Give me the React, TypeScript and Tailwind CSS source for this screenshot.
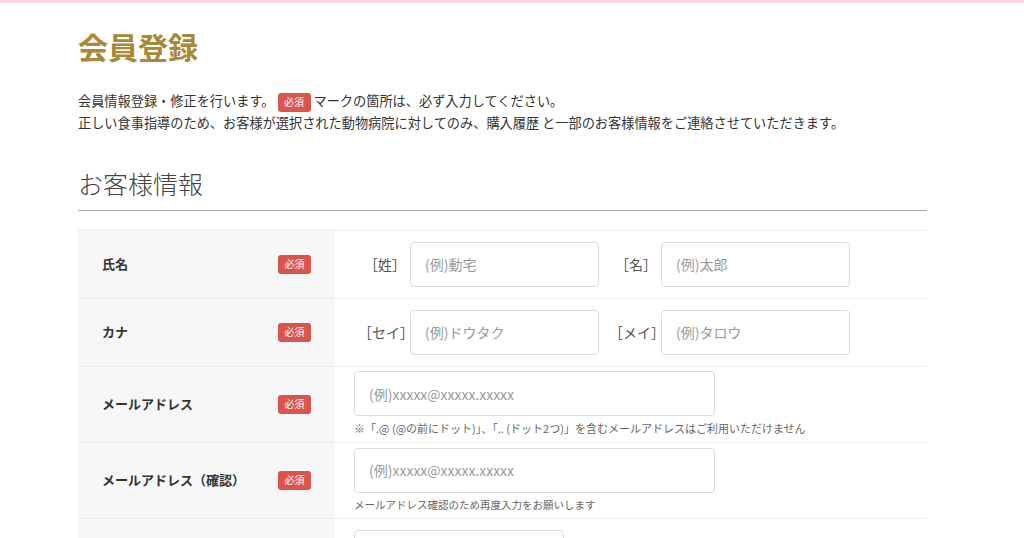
import React from "react";

const font = { fontFamily: '"Noto Sans CJK JP", "Noto Sans", sans-serif' };

const Badge = () => (
    <span className="inline-flex items-center justify-center w-[33px] h-[19px] rounded-[3px] bg-[#d9534f] text-white text-[10px] leading-none">
        必須
    </span>
);

const Field = ({ placeholder, w }: { placeholder: string; w: string }) => (
    <input
        placeholder={placeholder}
        className={`${w} h-[45px] rounded-[4px] border border-[#dcdcdc] bg-white px-[14px] text-[14px] text-[#333] placeholder:text-[#9a9a9a] outline-none`}
    />
);

interface RowProps {
    label: string;
    height: string;
    children: React.ReactNode;
}

const Row = ({ label, height, children }: RowProps) => (
    <div className={`flex border-b border-[#ebebeb] ${height}`}>
        <div className="w-[257px] shrink-0 bg-[#f7f7f7] flex items-center justify-between pl-[24px] pr-[24px]">
            <span className="text-[13px] font-bold text-[#333]">{label}</span>
            <Badge />
        </div>
        <div className="flex-1 flex flex-col justify-center pl-[19px]">{children}</div>
    </div>
);

export default function App() {
    return (
        <div className="min-h-screen bg-white border-t-[3px] border-[#fbd5dc]" style={font}>
            <div className="w-[849px] ml-[78px]">
                <h1 className="mt-[23px] text-[30px] font-bold text-[#a8893a] leading-[40px]">会員登録</h1>
                <div className="mt-[24px] text-[13.2px] leading-[21px] text-[#333]">
                    <p className="flex items-center">
                        会員情報登録・修正を行います。
                        <span className="mx-[3px]"><Badge /></span>
                        マークの箇所は、必ず入力してください。
                    </p>
                    <p>正しい食事指導のため、お客様が選択された動物病院に対してのみ、購入履歴 と一部のお客様情報をご連絡させていただきます。</p>
                </div>
                <h2 className="mt-[32px] text-[25px] font-light text-[#444] leading-[36px]">お客様情報</h2>
                <div className="mt-[9px] border-t border-[#a9a9a9]" />
                <div className="mt-[19px] border-t border-[#ebebeb]">
                    <Row label="氏名" height="h-[68px]">
                        <div className="flex items-center text-[14px] text-[#555]">
                            <span className="w-[56px] pl-[10px]">［姓］</span>
                            <Field placeholder="(例)動宅" w="w-[189px]" />
                            <span className="w-[62px] pl-[16px]">［名］</span>
                            <Field placeholder="(例)太郎" w="w-[189px]" />
                        </div>
                    </Row>
                    <Row label="カナ" height="h-[68px]">
                        <div className="flex items-center text-[14px] text-[#555]">
                            <span className="w-[56px] pl-[4px] whitespace-nowrap">［セイ］</span>
                            <Field placeholder="(例)ドウタク" w="w-[189px]" />
                            <span className="w-[62px] pl-[10px] whitespace-nowrap">［メイ］</span>
                            <Field placeholder="(例)タロウ" w="w-[189px]" />
                        </div>
                    </Row>
                    <Row label="メールアドレス" height="h-[76px]">
                        <Field placeholder="(例)xxxxx@xxxxx.xxxxx" w="w-[361px]" />
                        <p className="mt-[4px] text-[11px] text-[#666]">※「.@ (@の前にドット)」、「.. (ドット2つ)」を含むメールアドレスはご利用いただけません</p>
                    </Row>
                    <Row label="メールアドレス（確認）" height="h-[76px]">
                        <Field placeholder="(例)xxxxx@xxxxx.xxxxx" w="w-[361px]" />
                        <p className="mt-[4px] text-[10.5px] text-[#666]">メールアドレス確認のため再度入力をお願いします</p>
                    </Row>
                    <div className="flex h-[60px]">
                        <div className="w-[257px] shrink-0 bg-[#f7f7f7]" />
                        <div className="flex-1 pl-[19px] pt-[11px]">
                            <div className="w-[210px] h-[45px] rounded-[4px] border border-[#dcdcdc]" />
                        </div>
                    </div>
                </div>
            </div>
        </div>
    );
}
